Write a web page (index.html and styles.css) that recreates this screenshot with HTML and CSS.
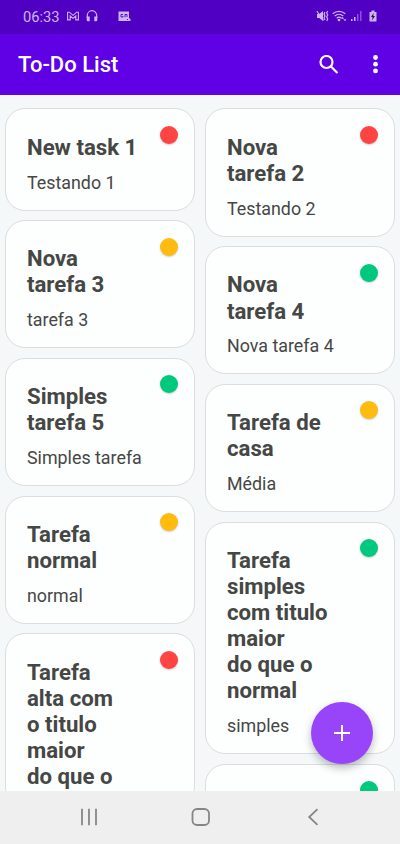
FILE: index.html
```html
<!DOCTYPE html>
<html lang="pt">
<head>
<meta charset="utf-8">
<title>To-Do List</title>
<link rel="stylesheet" href="styles.css">
</head>
<body>
<div class="screen">
  <header class="status">
    <span class="clock">06:33</span>
    <svg class="gmail" width="12" height="10" viewBox="0 0 12 10"><path d="M.6 1.200h1.800L6 4.300l3.600-3.100h1.800v7.700H8.800V5L6 7.300 3.200 5v3.900H.6z"/></svg>
    <svg class="phones" width="12" height="12" viewBox="0 0 12 12"><path class="line" d="M1.300 8V5.400a4.700 4.700 0 0 1 9.400 0V8"/><path d="M.7 6.500h3v4.700H2a1.300 1.300 0 0 1-1.300-1.300zM8.300 6.500h3v3.400a1.300 1.300 0 0 1-1.300 1.300H8.300z"/></svg>
    <svg class="news" width="13" height="11" viewBox="0 0 13 11"><path d="M.5.5h10.500v6.500l1.500 1v2H.5z"/><path class="cut" d="M5 3.500H3v2.500h2V5M7 3.300v3M7 3.500h2v2.500M9 8.500h1"/></svg>
    <div class="signals">
      <svg class="mute" width="13" height="12" viewBox="0 0 13 12"><path d="M1 4h2.200L7 1v10L3.200 8H1z"/><path class="line" d="m.8 1 6.700 9.500M9 2l-1 2 1 2-1 2 1 2M11.700 1l-1 2 1 2-1 2 1 2-1 2"/></svg>
      <svg class="wifi" width="15" height="12" viewBox="0 0 15 12"><path class="line" d="M.7 3.800a9.500 9.500 0 0 1 12.600 0M2.700 6a6.500 6.500 0 0 1 8.600 0M4.700 8.200a3.500 3.500 0 0 1 4.600 0"/><circle cx="7" cy="10" r="1.300"/><path d="m10.500 6.800 1.600 2H9zM13 11.200l-1.600-2h3z"/></svg>
      <svg class="bars" width="11" height="12" viewBox="0 0 11 12"><path d="M0 9h1.500v2H0zM3 7h1.500v4H3z"/><path class="dim" d="M6 4h1.500v7H6zM9 1h1.500v10H9z"/></svg>
      <svg class="battery" width="8" height="12" viewBox="0 0 8 12"><path d="M2.500.5h3V2h2v9.500h-7V2h2z"/><path class="bolt" d="M4.600 3 2 7h1.600L3 10.500 6 6H4.300z"/></svg>
    </div>
  </header>
  <nav class="appbar">
    <h1>To-Do List</h1>
    <svg class="search" width="20" height="20" viewBox="0 0 20 20"><circle cx="7.500" cy="7" r="6"/><path d="m12 11.500 6.500 6.500"/></svg>
    <svg class="more" width="6" height="20" viewBox="0 0 6 20"><circle cx="3.500" cy="2.500" r="2.400"/><circle cx="3.500" cy="9.200" r="2.400"/><circle cx="3.500" cy="15.900" r="2.400"/></svg>
  </nav>
  <main class="board">
    <div class="column">
      <article class="card"><h2>New task 1</h2><p>Testando 1</p><i class="dot high"></i></article>
      <article class="card"><h2>Nova<br>tarefa 3</h2><p>tarefa 3</p><i class="dot medium"></i></article>
      <article class="card"><h2>Simples<br>tarefa 5</h2><p>Simples tarefa</p><i class="dot low"></i></article>
      <article class="card"><h2>Tarefa<br>normal</h2><p>normal</p><i class="dot medium"></i></article>
      <article class="card"><h2>Tarefa<br>alta com<br>o titulo<br>maior<br>do que o</h2><i class="dot high"></i></article>
    </div>
    <div class="column">
      <article class="card"><h2>Nova<br>tarefa 2</h2><p>Testando 2</p><i class="dot high"></i></article>
      <article class="card"><h2>Nova<br>tarefa 4</h2><p>Nova tarefa 4</p><i class="dot low"></i></article>
      <article class="card"><h2>Tarefa de<br>casa</h2><p>Média</p><i class="dot medium"></i></article>
      <article class="card"><h2>Tarefa<br>simples<br>com titulo<br>maior<br>do que o<br>normal</h2><p>simples</p><i class="dot low"></i></article>
      <article class="card next"><i class="dot low"></i></article>
    </div>
    <button class="fab" aria-label="+"><svg width="16" height="16" viewBox="0 0 16 16"><path d="M8 0v16M0 8h16"/></svg></button>
  </main>
  <footer class="softkeys">
    <svg width="18" height="18" viewBox="0 0 18 18"><path d="M2 .8v16.400M9 .8v16.400M16 .8v16.400"/></svg>
    <svg width="20" height="18" viewBox="0 0 20 18"><rect x="1.500" y="1" width="16.500" height="16" rx="4.500"/></svg>
    <svg width="18" height="18" viewBox="0 0 18 18"><path d="M13.500 1.200 5.200 9l8.300 7.800"/></svg>
  </footer>
</div>
</body>
</html>
```
FILE: styles.css
```css
* { box-sizing: border-box; }
body { margin: 0; font-family: Roboto, "Liberation Sans", sans-serif; }
h1, h2, p { margin: 0; }
svg { display: block; flex: none; }
.screen { width: 400px; height: 844px; display: flex; flex-direction: column; overflow: hidden; background: #f4f8f9; }

.status { height: 34px; flex: none; display: flex; align-items: center; padding: 0 23px 2px 23px; background: #5000c2; color: #cfb4f1; fill: #cfb4f1; }
.clock { width: 44px; font-size: 14.700px; line-height: 16px; margin-top: 2px; }
.line { fill: none; stroke: #cfb4f1; stroke-width: 1.2; }
.gmail { fill: none; stroke: #cfb4f1; stroke-width: 1.100; }
.phones { margin-left: 7px; }
.news { margin-left: 20px; }
.cut { fill: none; stroke: #5000c2; stroke-width: .9; }
.signals { display: flex; margin-left: auto; }
.wifi { margin-left: 3px; }
.bars { margin-left: 4px; }
.dim { opacity: .45; }
.battery { margin-left: 7px; }
.bolt { fill: #30006e; }

.appbar { height: 61px; flex: none; display: flex; align-items: center; padding: 0 22px 0 18px; background: #5f00e5; color: #fff; }
.appbar h1 { flex: 1; font-size: 22px; font-weight: 500; line-height: 26px; padding-top: 1px; }
.search { margin-right: 33px; fill: none; stroke: #fff; stroke-width: 2.2; }
.more { fill: #fff; }

.board { position: relative; flex: 1; min-height: 0; display: grid; grid-template-columns: 190.500px 190.500px; gap: 9.500px; align-items: start; padding: 13.400px 4.700px 0; overflow: hidden; }
.column { display: flex; flex-direction: column; gap: 9.500px; }
.card { position: relative; padding: 24.300px 21px 17px 21.300px; border: 1px solid #dcdddc; border-radius: 20px; background: #fdfefe; color: #454745; }
.card h2 { font-size: 22.200px; font-weight: 700; line-height: 26.050px; white-space: nowrap; }
.card p { margin-top: 11.900px; font-size: 17.850px; line-height: 21px; }
.next { height: 128px; }
.dot { position: absolute; top: 16.500px; right: 16.500px; width: 18px; height: 18px; border-radius: 50%; box-shadow: 0 1px 2px #0003; }
.high { background: #ff4444; }
.medium { background: #ffbb10; }
.low { background: #00c97f; }

.fab { position: absolute; right: 27px; bottom: 27px; width: 62px; height: 62px; display: grid; place-items: center; padding: 0; border: 0; border-radius: 50%; background: #9844f8; box-shadow: 0 4px 8px #0004; }
.fab path { stroke: #fff; stroke-width: 2; }

.softkeys { height: 53px; flex: none; display: flex; justify-content: space-between; align-items: center; padding: 0 78px 2px 80px; background: #eeefee; }
.softkeys svg { fill: none; stroke: #858786; stroke-width: 1.800; }
```
